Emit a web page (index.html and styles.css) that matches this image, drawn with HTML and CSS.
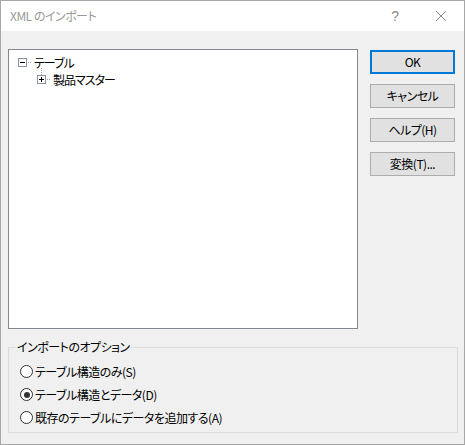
FILE: index.html
```html
<!DOCTYPE html>
<html lang="ja">
<head>
<meta charset="utf-8">
<title>XML のインポート</title>
<link rel="stylesheet" href="styles.css">
</head>
<body>
<div class="window">
  <div class="titlebar">
    <span class="title">XML のインポート</span>
    <span class="help">?</span>
    <svg class="close" width="12" height="12" viewBox="0 0 12 12"><path d="M1 1 L11 11 M11 1 L1 11" stroke="#8a8a8a" stroke-width="1" fill="none"/></svg>
  </div>
  <div class="content">
    <div class="top-row">
      <div class="tree">
        <div class="tree-row lvl1">
          <svg class="exp" width="15" height="17" viewBox="0 0 15 17">
            <rect x="0.5" y="4.5" width="8" height="8" fill="#fff" stroke="#8a94a6"/>
            <path d="M2 8.5 H7" stroke="#000"/>
            <path d="M10 8.5 H11 M12 8.5 H13" stroke="#a0a0a0"/>
          </svg>
          <span class="node">テーブル</span>
        </div>
        <div class="tree-row lvl2">
          <svg class="exp" width="15" height="17" viewBox="0 0 15 17">
            <path d="M4.5 -3 V-2 M4.5 -1 V0 M4.5 1 V2 M4.5 3 V4" stroke="#a0a0a0"/>
            <rect x="0.5" y="4.5" width="8" height="8" fill="#fff" stroke="#8a94a6"/>
            <path d="M2 8.5 H7 M4.5 6 V11" stroke="#000"/>
            <path d="M10 8.5 H11 M12 8.5 H13" stroke="#a0a0a0"/>
          </svg>
          <span class="node">製品マスター</span>
        </div>
      </div>
      <div class="buttons">
        <button class="btn default">OK</button>
        <button class="btn">キャンセル</button>
        <button class="btn">ヘルプ(H)</button>
        <button class="btn">変換(T)...</button>
      </div>
    </div>
    <fieldset class="options">
      <legend>インポートのオプション</legend>
      <div class="radios">
        <div class="radio-row"><span class="radio"></span><span>テーブル構造のみ(S)</span></div>
        <div class="radio-row"><span class="radio checked"></span><span>テーブル構造とデータ(D)</span></div>
        <div class="radio-row"><span class="radio"></span><span>既存のテーブルにデータを追加する(A)</span></div>
      </div>
    </fieldset>
  </div>
</div>
</body>
</html>
```
FILE: styles.css
```css
* { box-sizing: border-box; }
html, body { margin: 0; padding: 0; background: #f0f0f0; }
body {
  font-family: "Noto Sans CJK JP", "Noto Sans", sans-serif;
  font-size: 12px;
  font-feature-settings: "palt";
  letter-spacing: -0.5px;
  color: #000;
}
.window {
  width: 465px;
  height: 445px;
  border: 1px solid #a7a7a7;
  background: #f0f0f0;
  display: flex;
  flex-direction: column;
}
.titlebar {
  height: 30px;
  flex: none;
  background: #fff;
  display: flex;
  align-items: center;
  padding-left: 9px;
  color: #999;
}
.title { flex: 1; line-height: 16px; }
.help { font-family: "Liberation Sans", sans-serif; font-size: 14px; color: #8a8a8a; margin-right: 36px; letter-spacing: 0; }
.close { margin-right: 17px; }
.content {
  display: flex;
  flex-direction: column;
  padding: 18px 0 0 7px;
}
.top-row { display: flex; gap: 12px; }
.tree {
  width: 350px;
  height: 280px;
  border: 1px solid #828790;
  background: #fff;
  padding-top: 4px;
}
.tree-row { display: flex; align-items: center; height: 17px; line-height: 17px; }
.tree-row.lvl1 { padding-left: 9px; }
.tree-row.lvl2 { padding-left: 28px; }
.node { letter-spacing: -1px; }
.exp { flex: none; overflow: visible; margin-right: 1px; }
.buttons {
  display: flex;
  flex-direction: column;
  gap: 10px;
  margin-top: 1px;
}
.btn {
  width: 85px;
  height: 24px;
  border: 1px solid #adadad;
  background: #e1e1e1;
  font: inherit;
  font-feature-settings: "palt";
  letter-spacing: -0.5px;
  color: #000;
  padding: 0;
  line-height: 20px;
}
.btn.default { border: 2px solid #0078d7; }
.options {
  margin: 10px 0 0 0;
  width: 450px;
  border: 1px solid #dcdcdc;
  padding: 5px 0 3px 7px;
}
.options legend { padding: 0 1px; line-height: 16px; }
.radios { margin-left: 4px; }
.radio-row { display: flex; align-items: center; height: 23px; gap: 2px; }
.radio {
  width: 13px;
  height: 13px;
  border: 1px solid #333;
  border-radius: 50%;
  background: #fff;
  position: relative;
  flex: none;
}
.radio.checked::after {
  content: "";
  position: absolute;
  left: 2.5px;
  top: 2.5px;
  width: 6px;
  height: 6px;
  border-radius: 50%;
  background: #333;
}
```
